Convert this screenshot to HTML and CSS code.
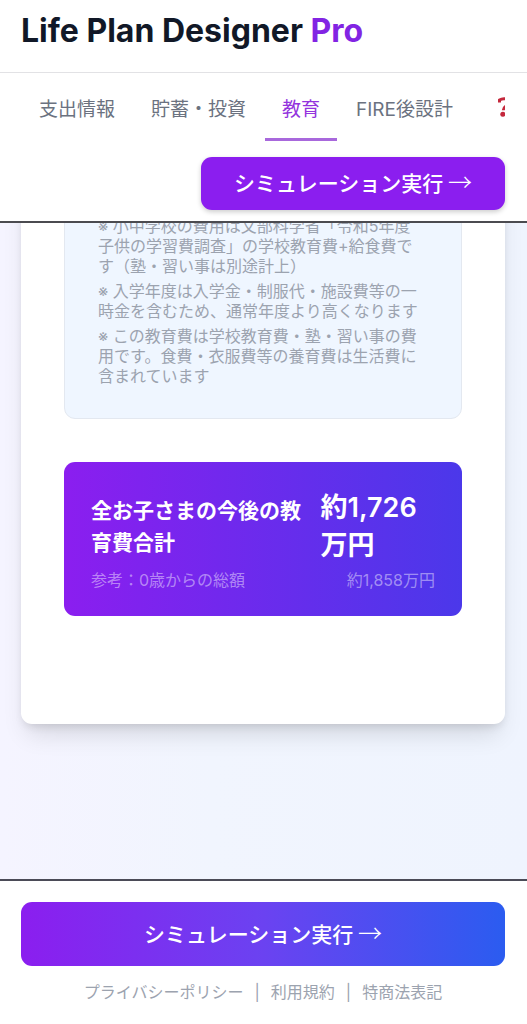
FILE: index.html
```html
<!DOCTYPE html>
<html lang="ja">
<head>
  <meta charset="UTF-8" />
  <meta name="viewport" content="width=device-width, initial-scale=1.0"/>
  <title>Life Plan Designer Pro</title>

  <link rel="stylesheet" href="styles.css">
</head>
<body>

  <!-- Header -->
  <header class="header">
    <div class="brand">
      <h1>Life Plan Designer <span>Pro</span></h1>
    </div>

    <nav class="tabs">
      <button type="button" class="tab">支出情報</button>
      <button type="button" class="tab">貯蓄・投資</button>
      <button type="button" class="tab active">教育</button>
      <button type="button" class="tab">FIRE後設計</button>
      <button type="button" class="tab" aria-label="ヘルプ">
        <svg class="help-icon" viewBox="0 0 28 20" aria-hidden="true">
          <path d="M10.500 5.600V3C12 2 13.500 1.700 15 1.700C18 1.700 19 3.500 19 6C19 9.600 14.500 9 14.300 13.200" fill="none" stroke="#c4283c" stroke-width="3"/>
          <circle cx="13.800" cy="17.300" r="2.500" fill="#c4283c"/>
        </svg>
      </button>
    </nav>

    <div class="header-action">
      <button type="button" class="btn btn-run">シミュレーション実行 <span class="arrow">→</span></button>
    </div>
  </header>

  <!-- Education step -->
  <main class="main">
    <section class="card">
      <div class="notes">
        <p>※ 小中学校の費用は文部科学省「令和5年度子供の学習費調査」の学校教育費+給食費です（塾・習い事は別途計上）</p>
        <p>※ 入学年度は入学金・制服代・施設費等の一時金を含むため、通常年度より高くなります</p>
        <p>※ この教育費は学校教育費・塾・習い事の費用です。食費・衣服費等の養育費は生活費に含まれています</p>
      </div>

      <!-- Total for all children -->
      <div class="total">
        <div class="total-main">
          <h2>全お子さまの今後の教育費合計</h2>
          <strong>約1,726万円</strong>
        </div>
        <div class="total-sub">
          <span>参考：0歳からの総額</span>
          <span>約1,858万円</span>
        </div>
      </div>
    </section>
  </main>

  <!-- Fixed bottom bar -->
  <footer class="footer">
    <button type="button" class="btn btn-wide">シミュレーション実行 <span class="arrow">→</span></button>
    <div class="footer-links">
      <a href="#">プライバシーポリシー</a>
      <span>|</span>
      <a href="#">利用規約</a>
      <span>|</span>
      <a href="#">特商法表記</a>
    </div>
  </footer>

</body>
</html>
```
FILE: styles.css
```css
* {
  box-sizing: border-box;
}

body {
  margin: 0;
  height: 100vh;
  display: flex;
  flex-direction: column;
  overflow: hidden;
  font-family: Inter, "Noto Sans CJK JP", sans-serif;
  font-size: 16px;
  line-height: 20px;
  background: linear-gradient(90deg, #f5f4ff, #f1f5fe 40%, #eff4fe);
}

h1,
h2,
p {
  margin: 0;
}

button {
  font-family: inherit;
  cursor: pointer;
}

/* Header */
.header {
  flex-shrink: 0;
  background: white;
  border-bottom: 2px solid #4b4b50;
}

.brand {
  padding: 11px 21px 21px;
  border-bottom: 1px solid #e2e2e5;
}

.brand h1 {
  font-size: 32px;
  line-height: 40px;
  font-weight: 700;
  color: #111827;
}

.brand span {
  color: #8224e3;
}

.tabs {
  display: flex;
  gap: 2px;
  margin: 0 22px;
  overflow: hidden;
}

.tab {
  flex-shrink: 0;
  height: 68px;
  padding: 3px 17px 0;
  border: none;
  border-bottom: 3px solid transparent;
  background: none;
  font-size: 19px;
  color: #6b7280;
  white-space: nowrap;
}

.tab.active {
  color: #9333dd;
  border-bottom-color: #a868dc;
}

.help-icon {
  display: block;
  width: 28px;
  height: 20px;
}

.header-action {
  display: flex;
  justify-content: flex-end;
  padding: 16px 22px 11px;
}

.btn {
  border: none;
  border-radius: 11px;
  font-family: "Noto Sans CJK JP", sans-serif;
  font-size: 21px;
  line-height: 30px;
  font-weight: 500;
  color: white;
}

.arrow {
  font-size: 24px;
  font-weight: 300;
  line-height: 24px;
}

.btn-run {
  padding: 10px 33px 13px;
  background: #8b1eef;
  box-shadow: 0 2px 5px rgba(0, 0, 0, 0.2);
}

/* Content is scrolled to its end */
.main {
  flex: 1;
  min-height: 0;
  display: flex;
  flex-direction: column;
  justify-content: flex-end;
  padding: 0 22px 155px 21px;
  overflow: hidden;
}

.card {
  flex-shrink: 0;
  padding: 43px 43px 108px;
  border-radius: 11px;
  background: white;
  box-shadow: 0 16px 24px -6px rgba(0, 0, 0, 0.12), 0 5px 10px -3px rgba(0, 0, 0, 0.12);
}

.notes {
  display: flex;
  flex-direction: column;
  gap: 5px;
  margin-bottom: 43px;
  padding: 32px 39px 32px 33px;
  border: 1px solid #e3e8f0;
  border-radius: 11px;
  background: #eff6ff;
  color: #9ca3af;
}

.total {
  padding: 27px 27px 26px;
  border-radius: 11px;
  background: linear-gradient(90deg, #8b1eef, #4b38ea);
  color: white;
}

.total-main {
  display: grid;
  grid-template-columns: 15fr 8fr;
  gap: 15px;
  align-items: center;
}

.total-main h2 {
  font-size: 21px;
  line-height: 32px;
  font-weight: 600;
}

.total-main strong {
  font-size: 27px;
  line-height: 38px;
  font-weight: 600;
}

.total-sub {
  display: flex;
  justify-content: space-between;
  margin-top: 5px;
  color: rgba(255, 255, 255, 0.45);
}

/* Footer */
.footer {
  flex-shrink: 0;
  padding: 21px 22px 22px 21px;
  border-top: 2px solid #4b4b57;
  background: white;
}

.btn-wide {
  width: 100%;
  padding: 16px 16px 18px;
  background: linear-gradient(90deg, #8b1eef, #6b42f1 50%, #2b5cf0);
}

.footer-links {
  display: flex;
  justify-content: center;
  gap: 11px;
  margin-top: 16px;
  color: #9ca3af;
}

.footer-links a {
  color: inherit;
  text-decoration: none;
}
```
